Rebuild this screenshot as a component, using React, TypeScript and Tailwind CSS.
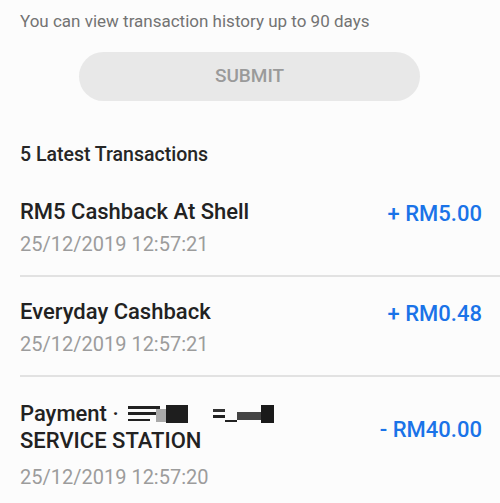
import React from "react";

interface Txn {
  title: React.ReactNode;
  date: string;
  amount: string;
  tall?: boolean;
}

function Redacted() {
  return (
    <svg width="146" height="18" viewBox="0 0 146 18" className="inline-block align-[-2px] ml-[9px]">
      <rect x="0" y="1" width="32" height="3" fill="#222" />
      <rect x="0" y="7" width="32" height="3" fill="#222" />
      <rect x="0" y="14" width="22" height="2" fill="#222" />
      <rect x="28" y="4" width="12" height="13" fill="#aaa" />
      <rect x="38" y="0" width="22" height="18" fill="#1e1e1e" />
      <rect x="85" y="4" width="12" height="3" fill="#333" />
      <rect x="85" y="10" width="12" height="3" fill="#222" />
      <rect x="97" y="15" width="12" height="2" fill="#222" />
      <rect x="109" y="7" width="24" height="8" fill="#444" />
      <rect x="133" y="0" width="13" height="18" fill="#1a1a1a" />
    </svg>
  );
}

export default function App() {
  const txns: Txn[] = [
    { title: "RM5 Cashback At Shell", date: "25/12/2019 12:57:21", amount: "+ RM5.00" },
    { title: "Everyday Cashback", date: "25/12/2019 12:57:21", amount: "+ RM0.48" },
    {
      title: (
        <>
          Payment ·<Redacted />
          <br />
          SERVICE STATION
        </>
      ),
      date: "25/12/2019 12:57:20",
      amount: "- RM40.00",
      tall: true,
    },
  ];

  return (
    <div
      className="w-[500px] h-[503px] overflow-hidden bg-[#fcfcfc]"
      style={{ fontFamily: "Roboto, 'Liberation Sans', sans-serif" }}
    >
      <p className="pl-5 pt-[9px] text-[17px] leading-6 text-[#737373]">
        You can view transaction history up to 90 days
      </p>

      <div className="flex justify-center mt-[19px] pr-[1px]">
        <button className="w-[341px] h-[49px] rounded-full bg-[#e8e8e8] text-[19px] font-medium text-[#9a9a9a]">
          SUBMIT
        </button>
      </div>

      <h2 className="pl-5 mt-[42px] text-[19.5px] font-medium leading-6 text-[#262626]">
        5 Latest Transactions
      </h2>

      <div className="ml-5 mt-[31px]">
        {txns.map((t, i) => (
          <div
            key={i}
            className={`pr-[18px] pb-[19px] ${
              i < txns.length - 1 ? "border-b-2 border-[#e2e2e2] mb-[21px]" : ""
            }`}
          >
            <div className={`flex items-center justify-between ${t.tall ? "pt-[2px]" : ""}`}>
              <div className="text-[22px] font-medium leading-[27px] text-[#222]">{t.title}</div>
              <div className="mt-[4px] text-[22px] font-medium leading-[23px] text-[#1a73e8]">
                {t.amount}
              </div>
            </div>
            <div className={`${t.tall ? "mt-[11px]" : "mt-[7px]"} text-[20px] leading-6 text-[#9c9c9c]`}>
              {t.date}
            </div>
          </div>
        ))}
      </div>
    </div>
  );
}
